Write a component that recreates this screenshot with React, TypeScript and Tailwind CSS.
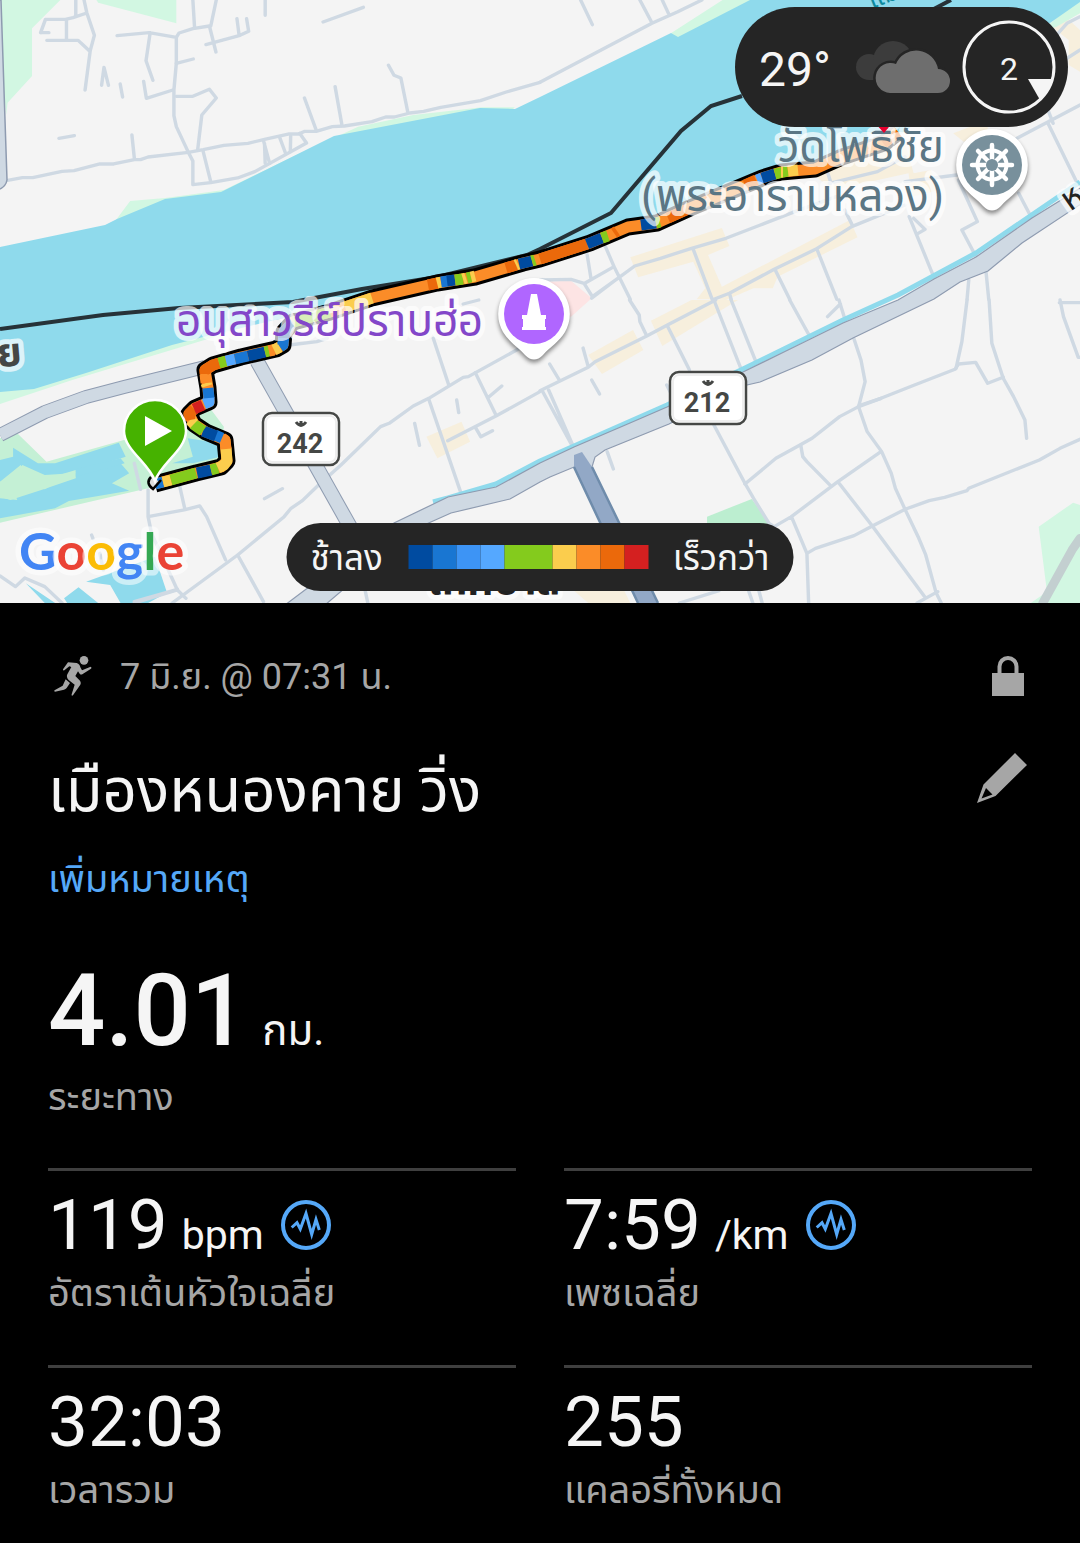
import React from "react";

const PALETTE = {
  n: "#004ba0",
  b: "#1976d2",
  l: "#55a8ff",
  g: "#84cb1d",
  y: "#fbcd4d",
  o: "#fb8c28",
  d: "#eb690b",
  r: "#d42020",
};

const MINOR_NW = [
  "M22 541L65 533H95L180 514L215 512L290 492H330L390 479H408L430 471L547 457L590 449L650 436L720 430L768 418L840 402H868L885 394H918L965 380L1000 378L1080 365L1120 351H1145L1190 339L1230 334L1280 322L1395 302L1470 276L1568 247",
  "M220 0V48M118 98H142M118 98L132 58H190L212 53L252 39M193 58V118M136 121H227L260 153M244 0L252 38L274 106L262 152L247 270",
  "M295 256L302 202L315 256M349 252L356 291M417 244L425 295L502 270M171 415L216 407M383 405L390 474",
  "M340 107L433 98L512 112M436 98L424 182L444 241M512 112V189L505 270V347L512 380L546 455L560 483V554L612 548L690 534L740 515L890 429L870 400",
  "M512 112L520 99L560 86L608 78L627 156M560 0L565 84M628 0L612 78M598 134L697 106L722 94L716 56M688 56L694 104M512 190L561 177",
  "M512 289H560L608 268L628 294L586 345L574 449M590 455L612 546M765 422L783 490M768 430L770 490M812 412L830 462M844 408L843 455",
  "M770 0V46M938 66L1055 22M884 294L918 390M973 260L993 376M1128 196L1144 226L1164 234L1184 336",
];
const MINOR_NE = [
  "M0 247L150 165L325 70L400 35L470 0M290 0L325 68M355 0L373 40M118 0L152 74",
  "M130 850L215 800L190 740M137 765L148 835M0 840L90 838L128 850L152 890L230 832L275 798L350 775L440 745L540 715L640 675L740 635L860 590M215 800L262 898M445 748L500 898M230 832L150 895",
  "M505 898L550 880L680 808L800 748L905 680L1060 615M550 880L555 898M682 808L725 898M805 750L862 898M885 630L908 678",
  "M1072 650L1145 835M1085 655L1118 688L1098 700M1060 545L1210 525M1215 540L1270 665L1225 690L1265 768M1390 580L1405 610L1428 655",
  "M840 550L980 515L1060 470M830 500L845 550M1385 415L1568 315M1475 370L1560 550M1475 330L1490 370M1500 105L1530 70L1568 50M1500 195L1568 150M1295 815L1303 898M1245 840L1240 898",
];
const MINOR_SW = [
  "M430 570V650L440 700L515 870L540 895M430 650L535 630L580 618L600 650L655 780M522 560L537 628M768 596L820 566M390 490L408 568",
  "M515 870L390 909M500 909L690 765L825 650L845 625L878 602L925 555L990 495L1105 380L1130 370L1200 318L1245 295L1345 232L1360 230L1500 150L1568 110M690 765L765 905",
  "M1258 115L1303 255M1245 298L1338 578M1380 218L1440 345M1300 422L1440 348L1568 275M1420 290L1457 258M1326 300L1332 338M1204 370L1218 436M1382 385L1396 410L1430 392",
  "M840 135L920 125L950 115M0 828L45 860L72 834L130 860L180 909M266 705L270 716M290 760L300 810M1060 870L1068 909M1345 12L1390 0M515 868L390 905",
];
const MINOR_SE = [
  "M0 272L140 202L160 185L310 108L370 75L510 0M28 192L56 240M125 144L140 200M150 240L173 282M260 0L288 45L290 65L310 108M370 78L434 210",
  "M8 275L95 440M25 270L97 440M195 455L213 507M505 0L585 210M555 0L628 188M725 0L788 118M868 0L888 66M872 12L835 50M368 255L380 280",
  "M912 118L932 180L944 245L925 320L950 395L992 455L1020 520L1032 565L1060 628L1100 715L1120 765L1150 878L1165 909M595 552L685 475L755 435L790 415L870 350L925 320L990 295L1080 258L1205 208L1215 192L1265 187L1300 250L1345 232",
  "M925 318L940 312L990 295M1240 0L1225 125L1208 205M1304 0L1312 130L1345 235L1375 290L1408 360L1413 415M1510 0L1520 50L1563 172H1568M1508 8H1568",
  "M505 375L595 550L620 595L665 670L680 680L730 650L865 545L990 455M757 435L763 470L775 485L843 556M865 545L965 678L1118 892M730 650L775 760L780 909M775 760L800 745L912 707L965 678L1060 628L1130 602L1175 592L1240 572L1245 565L1450 480L1510 445L1568 418M1095 909L1155 875M405 909L520 872M605 870L618 909M635 870L645 909",
];

type TileProps = { x: number; y: number; children: React.ReactNode };

function Tile({ x, y, children }: TileProps) {
  return (
    <g transform={`translate(${x} ${y}) scale(0.3444 0.3333)`} fill="none" stroke="#cfd9e3" strokeWidth="10" strokeLinecap="round" strokeLinejoin="round">
      {children}
    </g>
  );
}

const roads = (list: string[]) => list.map((d) => <path key={d} d={d} />);

const ROUTE =
  "M155 484L196 473L221 467L227 461L225 440L206 432L194 424L189 414L195 408L209 402L208 388L205 370L213 365L241 357L276 349L283 345L284 332L293 322L330 312L372 298L437 283L475 277L523 263L540 259L590 243L628 227L657 223L690 208L762 178L781 172L815 169L842 157L884 143L898 132";

const SEGMENTS: [keyof typeof PALETTE, string][] = [
  ["b", "M155 484L163 482"],
  ["y", "M163 482L171 480"],
  ["g", "M171 480L196 473"],
  ["n", "M197 473L211 470"],
  ["g", "M211 470L218 468"],
  ["y", "M218 468L224 465L227 461L226 448"],
  ["o", "M226 449L225 440L222 438"],
  ["b", "M222 438L215 435"],
  ["n", "M216 436L203 431"],
  ["g", "M203 431L193 424"],
  ["y", "M194 424L190 420"],
  ["d", "M190 420L189 414L194 409"],
  ["r", "M194 409L203 405"],
  ["l", "M204 404L209 402L209 397"],
  ["b", "M209 398L208 388"],
  ["y", "M207 386L206 383"],
  ["o", "M206 383L205 374"],
  ["d", "M205 374L205 370L213 365L219 363"],
  ["g", "M219 363L226 361"],
  ["l", "M226 361L235 359"],
  ["b", "M235 359L248 356"],
  ["n", "M248 356L265 352"],
  ["g", "M265 352L269 351"],
  ["o", "M269 351L274 350"],
  ["y", "M274 350L280 347"],
  ["b", "M280 347L283 345L284 334"],
  ["n", "M284 338L284 332L293 322"],
  ["g", "M293 322L330 312"],
  ["y", "M345 307L372 298"],
  ["d", "M428 285L438 283"],
  ["y", "M437 283L441 282"],
  ["b", "M441 282L448 281"],
  ["n", "M447 281L455 280"],
  ["g", "M455 280L463 279"],
  ["y", "M463 279L466 278"],
  ["g", "M467 278L471 277"],
  ["y", "M471 277L475 276"],
  ["d", "M506 268L516 265"],
  ["y", "M516 265L518 264"],
  ["n", "M519 264L532 261"],
  ["g", "M532 261L535 260"],
  ["d", "M540 259L587 244"],
  ["n", "M587 244L602 238"],
  ["g", "M602 238L608 236"],
  ["d", "M614 233L617 231"],
  ["n", "M641 225L656 223"],
  ["g", "M656 223L660 222"],
  ["d", "M668 218L686 210"],
  ["d", "M745 185L756 180"],
  ["l", "M757 180L762 178"],
  ["n", "M762 178L775 174"],
  ["g", "M775 174L788 171"],
  ["y", "M781 172L783 172M788 171L798 170"],
  ["d", "M883 143L898 132"],
];

function Shield({ x, y, label }: { x: number; y: number; label: string }) {
  return (
    <g>
      <rect x={x + 1} y={y + 1} width="76" height="52" rx="9" fill="#fff" stroke="#454745" strokeWidth="2.5" />
      <rect x={x + 4} y={y + 4} width="70" height="46" rx="6" fill="none" stroke="#eeeeee" strokeWidth="2" />
      <path d={`M${x + 34} ${y + 10}q5 7 10 0M${x + 39} ${y + 9}v4`} fill="none" stroke="#454745" strokeWidth="3" />
      <text x={x + 38} y={y + 41} textAnchor="middle" fill="#454745" fontSize="27" fontWeight="700" className="font-['Roboto',sans-serif]">
        {label}
      </text>
    </g>
  );
}

function PlacePin({ x, y, color, children }: { x: number; y: number; color: string; children: React.ReactNode }) {
  return (
    <g transform={`translate(${x} ${y})`}>
      <path
        d="M0 -36A36 36 0 0 1 31 18C25 28 17 32 9 41Q0 50 -9 41C-17 32 -25 28 -31 18A36 36 0 0 1 0 -36Z"
        fill="#fff"
        className="drop-shadow-[0_3px_2px_rgba(0,0,0,0.45)]"
      />
      <circle r="30" fill={color} />
      {children}
    </g>
  );
}

function MapView() {
  return (
    <svg viewBox="0 0 1080 603" className="block h-auto w-full" role="img" aria-label="Map">
      <rect width="1080" height="603" fill="#f4f4f4" />
      <Tile x={0} y={0}>
        <g fill="#d2f7e2" stroke="none">
          <path d="M0 0H175L93 85V228L22 308L18 345L5 200Z" />
          <path d="M280 0H512V70L285 8Z" />
          <path d="M335 662L378 603L480 594L650 570L850 470L1040 380L1200 345L1400 322H1495L1300 500L600 700Z" />
        </g>
      </Tile>
      <Tile x={540} y={0}>
        <g fill="#f7efdd" stroke="none">
          <path d="M262 772L528 684L550 738L488 765L530 865L505 898H455L480 865L445 785L285 832Z" />
          <path d="M520 865L900 660L922 712L690 830L676 865L620 865L540 900L505 898Z" />
          <path d="M790 520L1060 430L1085 520L1135 510L1160 570L1080 590L1070 520L850 570Z" />
          <path d="M1480 75L1520 45L1568 90V215L1535 195V120Z" />
          <path d="M1200 400L1300 360V410L1230 425Z" />
        </g>
        <path d="M0 845L90 842L150 895L90 950L0 960Z" fill="#fde4e4" stroke="none" />
        <path d="M380 100L402 116L640 0H530ZM1450 95L1568 0V40L1500 80Z" fill="#d2f7e2" stroke="none" />
      </Tile>
      <Tile x={0} y={300}>
        <g stroke="none">
          <path d="M0 260V312L210 240L620 112L800 50Z" fill="#d2f7e2" />
          <path d="M0 415L50 400L135 485L360 420H420L520 340L610 325L650 380L640 490L430 565L0 668Z" fill="#c4f0d5" />
          <g fill="#8fdaec">
            <path d="M0 480L38 470V443L110 490L160 490L345 428L365 470L210 520L130 525L65 495L40 540L0 545Z" />
            <path d="M0 595L50 600L35 555L130 568L215 520L350 490L375 520L325 550L375 572L200 603L160 625L0 655Z" />
            <path d="M0 545L60 495L105 545L220 510V535L120 570L30 600L0 590Z" fill="#c4f0d5" />
            <path d="M220 508L350 475L362 490L220 530ZM500 490L560 470L545 415L640 430V470L560 490Z" />
            <path d="M250 845L450 770L485 878L430 909H350L320 855ZM186 895L228 862L285 909H195ZM75 850L160 909H130Z" />
          </g>
          <path d="M1238 410L1340 365L1365 425L1270 475Z" fill="#f7efdd" />
        </g>
      </Tile>
      <Tile x={540} y={300}>
        <g stroke="none">
          <path d="M140 165L270 90L300 150L180 222ZM322 62L440 0H575L355 138Z" fill="#f7efdd" />
          <path d="M100 873H245L262 909H140Z" fill="#f7efdd" />
          <path d="M485 650L615 597L680 690H485Z" fill="#bceed0" />
          <path d="M1448 680L1548 608L1568 615V909H1425L1472 875Z" fill="#d2f7e2" />
        </g>
        <path d="M1460 909L1545 750L1568 715" stroke="#c3cfd0" strokeWidth="26" />
      </Tile>

      <path
        d="M0 247L105 225L117 219L165 199L221 192L334 136L480 108L515 109L540 97L671 33L678 37L750 0H1080V2L1050 23L900 135L800 172L700 205L640 222L540 256L440 281L380 300L275 320L207 336L172 345L86 373L34 389L0 392Z"
        fill="#8fdaec"
      />

      <Tile x={0} y={0}>{roads(MINOR_NW)}</Tile>
      <Tile x={540} y={0}>{roads(MINOR_NE)}</Tile>
      <Tile x={0} y={300}>{roads(MINOR_SW)}</Tile>
      <Tile x={540} y={300}>{roads(MINOR_SE)}</Tile>

      <path d="M-1 0H1L7 180Q6 186 0 189" fill="#cfd9e3" stroke="#8e9bb0" strokeWidth="1.5" />
      <g fill="none" strokeLinejoin="round">
        <path d="M0 435L45 412L86 397L124 387L205 367" stroke="#8e9bb0" strokeWidth="14" />
        <path d="M0 435L45 412L86 397L124 387L205 367" stroke="#cfd9e3" strokeWidth="12" />
        <path d="M257 361L352 530" stroke="#8e9bb0" strokeWidth="15" />
        <path d="M257 361L352 530" stroke="#cfd9e3" strokeWidth="13" />
        <path d="M433 502L448 498L496 484L540 461L667 405L743 369L843 320L898 295L976 253L1080 182" stroke="#8fdaec" strokeWidth="5" />
      </g>
      <path
        d="M1090 182L1032 218L976 257L934 279L898 300L843 323L788 350L743 372L667 407L630 423L574 447L540 463L496 487L448 497L394 523L285 605H325L413 530L451 513L510 499L540 482L550 477L574 467H592L595 457L605 450L669 424L747 385L760 382L812 360L853 338L934 299L960 282L988 271L1022 243L1090 198Z"
        fill="#cfd9e3"
        stroke="#8e9bb0"
        strokeWidth="1.2"
      />
      <path d="M574 455L582 452L592 467L658 603H638L574 468Z" fill="#92a8c6" />
      <path d="M574 467L638 603M592 467L658 603" stroke="#6f8cab" strokeWidth="2.5" />

      <g fill="none" stroke="#263238" strokeWidth="4">
        <path d="M0 329L103 315L179 308L293 302L362 289L437 277L527 255L540 249L611 213L681 131L711 106L742 96" />
        <path d="M930 11L951 0" />
      </g>

      <g fill="none" strokeLinejoin="round">
        <path d={ROUTE} stroke="#000" strokeWidth="17" />
        <path d={ROUTE} stroke={PALETTE.o} strokeWidth="11" />
        {SEGMENTS.map(([color, d]) => (
          <path key={d} d={d} stroke={PALETTE[color]} strokeWidth="11" />
        ))}
      </g>

      <g
        stroke="#fff"
        strokeOpacity="0.7"
        strokeWidth="10"
        strokeLinejoin="round"
        className="font-['Roboto','Noto_Sans_Thai','Noto_Sans',sans-serif] [paint-order:stroke]"
      >
        <text x="176" y="336" fill="#8347c9" fontSize="44">
          อนุสาวรีย์ปราบฮ่อ
        </text>
        <text x="944" y="162" textAnchor="end" fill="#5b7684" fontSize="44">
          วัดโพธิ์ชัย
        </text>
        <text x="944" y="211" textAnchor="end" fill="#5b7684" fontSize="44">
          (พระอารามหลวง)
        </text>
        <text x="-2" y="367" fill="#454745" fontSize="40" fontWeight="700" transform="rotate(-5 0 367)">
          ย
        </text>
        <text x="1070" y="212" fill="#222" fontSize="34" transform="rotate(-35 1070 212)">
          ห
        </text>
        <text x="428" y="594" fill="#222" fontSize="40" fontWeight="700">
          เทศบาล
        </text>
        <text x="872" y="9" fill="#0d8a9e" fontSize="26" transform="rotate(-22 872 9)" strokeOpacity="0">
          แม่น้ำ
        </text>
      </g>
      <path d="M874 122H893L884 133Z" fill="#e6002d" />

      <Shield x={262} y={412} label="242" />
      <Shield x={669} y={371} label="212" />

      <PlacePin x={534} y={314} color="#b066ff">
        <path d="M-3 -20H3L7 1H12V5H11V13H12V16H-12V13H-11V5H-12V1H-7Z" fill="#fff" />
      </PlacePin>
      <PlacePin x={992} y={165} color="#78909c">
        <g fill="none" stroke="#fff" strokeLinecap="round">
          <circle r="14.5" strokeWidth="4" />
          <path d="M0 -20V20M-20 0H20M-14 -14L14 14M-14 14L14 -14" strokeWidth="4.5" />
        </g>
        <circle r="6" fill="#78909c" />
      </PlacePin>

      <path d="M152 477Q146 483 153 489L160 482Z" fill="#ddd" />
      <path d="M151 477Q145 483 153 489L161 480" fill="none" stroke="#000" strokeWidth="2.5" />
      <path
        d="M155 481C149 463 124 450 124 431A31 31 0 0 1 186 431C186 450 161 463 155 481Z"
        fill="#46b200"
        stroke="#fff"
        strokeWidth="2.5"
      />
      <path d="M145 416L172 431L145 446Z" fill="#fff" />

      <text
        x="19"
        y="570"
        fontSize="52"
        fontWeight="700"
        stroke="#fff"
        strokeOpacity="0.55"
        strokeWidth="11"
        strokeLinejoin="round"
        className="font-['Lato',sans-serif] [paint-order:stroke]"
      >
        <tspan fill="#4285f4">G</tspan>
        <tspan fill="#ea4335">o</tspan>
        <tspan fill="#fbbc05">o</tspan>
        <tspan fill="#4285f4">g</tspan>
        <tspan fill="#34a853">l</tspan>
        <tspan fill="#ea4335">e</tspan>
      </text>
    </svg>
  );
}

function WeatherPill() {
  return (
    <div className="absolute top-[7px] right-3 flex h-30 items-center rounded-full bg-[#252525] pr-3 pl-6 text-[#f5f5f5]">
      <span className="w-[97px] pt-1.5 text-5xl">29°</span>
      <svg width="94" height="54" viewBox="0 0 94 54" aria-label="Cloudy">
        <g fill="#3c3c3c">
          <circle cx="13" cy="27" r="13" />
          <circle cx="37" cy="21" r="20" />
          <path d="M13 20H45V40H13Z" />
        </g>
        <path
          d="M34 53A15 15 0 1 1 40 24A22 22 0 0 1 82 29A12 12 0 0 1 82 53Z"
          fill="#6e6e6e"
          stroke="#252525"
          strokeWidth="5"
          className="[paint-order:stroke]"
        />
      </svg>
      <div className="relative ml-3 size-[94px]">
        <svg viewBox="0 0 94 94" className="size-full" aria-label="Wind direction">
          <circle cx="47" cy="47" r="45" fill="none" stroke="#f5f5f5" strokeWidth="3" />
          <path d="M66 59H91L88 67L78 80Z" fill="#f5f5f5" />
        </svg>
        <span className="absolute inset-0 flex items-center justify-center pt-1 text-[32px]">2</span>
      </div>
    </div>
  );
}

function LegendPill() {
  return (
    <div className="absolute bottom-3 left-1/2 flex h-17 -translate-x-1/2 items-center rounded-full bg-[#252525] px-6 text-[35px] whitespace-nowrap text-[#f5f5f5]">
      <span className="pt-1">ช้าลง</span>
      <div className="mr-6 ml-[26px] flex h-6">
        <i className="w-6 bg-[#004ba0]" />
        <i className="w-6 bg-[#1976d2]" />
        <i className="w-6 bg-[#3d94f5]" />
        <i className="w-6 bg-[#55a8ff]" />
        <i className="w-12 bg-[#84cb1d]" />
        <i className="w-6 bg-[#fbcd4d]" />
        <i className="w-6 bg-[#fb8c28]" />
        <i className="w-6 bg-[#eb690b]" />
        <i className="w-6 bg-[#d42020]" />
      </div>
      <span className="pt-1">เร็วกว่า</span>
    </div>
  );
}

function RunnerIcon() {
  return (
    <svg width="38" height="40" viewBox="0 0 114 120" fill="#a6a6a6" aria-hidden="true">
      <circle cx="90" cy="13" r="13" />
      <path d="M42 19L68 21Q78 25 79 34L84 43L110 32Q114 34 111 38L85 55Q80 57 77 53L72 46L64 60L78 74Q82 80 79 86L57 118Q52 121 53 115L62 86L44 72Q36 64 40 55L52 33L46 31L31 43Q25 44 28 38Z" />
      <path d="M35 70L48 81L38 96Q35 100 30 101L3 107Q-2 106 3 102L26 89Z" />
    </svg>
  );
}

function PulseIcon() {
  return (
    <svg width="50" height="50" viewBox="0 0 50 50" fill="none" stroke="#55a8f8" aria-hidden="true">
      <circle cx="25" cy="25" r="23" strokeWidth="4" />
      <path d="M10.700 27.500L16 22.700L19.300 29L25 13.500L30.700 34.500L35 19.500L38.300 30" strokeWidth="3" strokeMiterlimit="10" />
    </svg>
  );
}

type StatProps = { value: string; unit?: string; label: string; pulse?: boolean };

function Stat({ value, unit, label, pulse }: StatProps) {
  return (
    <div className="border-t-3 border-[#3f3f3f] pt-3.5">
      <div className="flex h-20 items-center">
        <dd className="flex items-baseline text-[71px] leading-20">
          {value}
          {unit && <span className="ml-3.5 text-[41px] leading-12">{unit}</span>}
        </dd>
        {pulse && (
          <button type="button" aria-label={`กราฟ ${label}`} className="ml-[17px]">
            <PulseIcon />
          </button>
        )}
      </div>
      <dt className="mt-1 text-[38px] leading-12 text-[#a6a6a6]">{label}</dt>
    </div>
  );
}

export default function App() {
  return (
    <main className="min-h-screen bg-black font-['Roboto','Noto_Sans_Thai','Noto_Sans',sans-serif] text-[#f5f5f5]">
      <section className="relative overflow-hidden">
        <MapView />
        <WeatherPill />
        <LegendPill />
      </section>

      <section className="px-12 pt-12.5 pb-6">
        <div className="flex h-12 items-center text-4xl leading-12 text-[#a6a6a6]">
          <span className="mb-0.5 ml-1.5">
            <RunnerIcon />
          </span>
          <p className="ml-7">7 มิ.ย. @ 07:31 น.</p>
          <button type="button" aria-label="ความเป็นส่วนตัว" className="mr-2 mb-0.5 ml-auto">
            <svg width="32" height="40" viewBox="0 0 32 40">
              <path d="M0 17H32V40H0Z" fill="#a6a6a6" />
              <path d="M7.500 18V10.500A8.500 8.500 0 0 1 24.500 10.500V18" fill="none" stroke="#a6a6a6" strokeWidth="4" />
            </svg>
          </button>
        </div>

        <div className="mt-12.5 flex h-20 items-center justify-between">
          <h1 className="text-6xl leading-20">เมืองหนองคาย วิ่ง</h1>
          <button type="button" aria-label="แก้ไข" className="mr-[5px] mb-6.5">
            <svg width="50" height="50" viewBox="0 0 50 50">
              <path d="M38 0L50 12L18.500 43L0 50L6.500 31.500ZM9 35L4.500 45.500L15.500 41.500Z" fill="#a6a6a6" fillRule="evenodd" />
            </svg>
          </button>
        </div>

        <a href="#note" className="mt-6 block w-fit text-[38px] leading-12 text-[#55a8f8]">
          เพิ่มหมายเหตุ
        </a>

        <dl>
          <div className="mt-13">
            <dd className="h-28 text-[101px] leading-28 font-medium">
              4.01
              <span className="ml-3.5 text-[42px] font-normal">กม.</span>
            </dd>
            <dt className="mt-1.5 text-[38px] leading-12 text-[#a6a6a6]">ระยะทาง</dt>
          </div>

          <div className="mt-[47px] grid grid-cols-2 gap-12">
            <Stat value="119" unit="bpm" label="อัตราเต้นหัวใจเฉลี่ย" pulse />
            <Stat value="7:59" unit="/km" label="เพซเฉลี่ย" pulse />
            <Stat value="32:03" label="เวลารวม" />
            <Stat value="255" label="แคลอรี่ทั้งหมด" />
          </div>
        </dl>
      </section>
    </main>
  );
}
